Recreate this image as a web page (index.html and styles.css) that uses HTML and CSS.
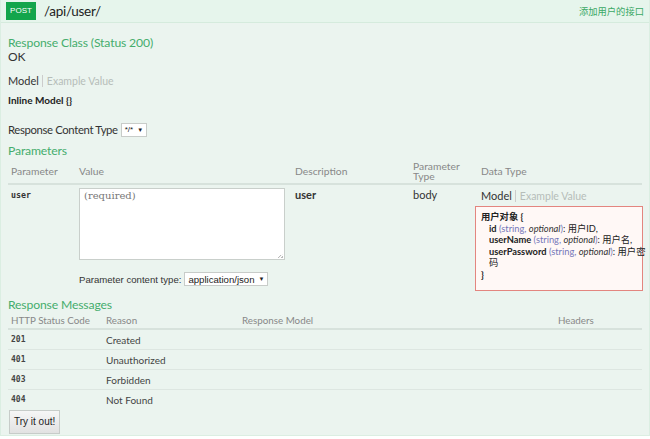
FILE: index.html
```html
<!DOCTYPE html>
<html>
<head>
<meta charset="utf-8">
<link rel="stylesheet" href="styles.css">
</head>
<body>
<div class="op">
  <div class="heading">
    <span class="verb">POST</span>
    <span class="path">/api/user/</span>
    <span class="summary">添加用户的接口</span>
  </div>
  <div class="content">
    <h4 class="sec first">Response Class (Status 200)</h4>
    <div class="ok">OK</div>
    <div class="tabs"><span class="tab-on">Model</span><span class="tab-sep"></span><span class="tab-off">Example Value</span></div>
    <div class="inline-model">Inline Model {}</div>
    <div class="rct">Response Content Type <span class="sel small">*/* <i class="arr">▼</i></span></div>
    <h4 class="sec">Parameters</h4>
    <table class="params">
      <colgroup>
        <col class="pc1"><col class="pc2"><col class="pc3"><col class="pc4"><col>
      </colgroup>
      <thead>
        <tr>
          <th>Parameter</th>
          <th>Value</th>
          <th>Description</th>
          <th>Parameter<br>Type</th>
          <th>Data Type</th>
        </tr>
      </thead>
      <tbody>
        <tr>
          <td class="code">user</td>
          <td>
            <div class="ta">(required)<span class="grip"></span></div>
            <div class="pct">Parameter content type: <span class="sel">application/json <i class="arr">▼</i></span></div>
          </td>
          <td class="bold">user</td>
          <td>body</td>
          <td>
            <div class="tabs small-tabs"><span class="tab-on">Model</span><span class="tab-sep"></span><span class="tab-off">Example Value</span></div>
            <div class="model">
              <div class="mb">用户对象 {</div>
              <div class="prop"><b>id</b> <span class="ty">(string, <em>optional</em>)</span>: 用户ID,</div>
              <div class="prop"><b>userName</b> <span class="ty">(string, <em>optional</em>)</span>: 用户名,</div>
              <div class="prop"><b>userPassword</b> <span class="ty">(string, <em>optional</em>)</span>: 用户密<br>码</div>
              <div class="mb">}</div>
            </div>
          </td>
        </tr>
      </tbody>
    </table>
    <h4 class="sec msgs">Response Messages</h4>
    <table class="resp">
      <colgroup>
        <col class="rc1"><col class="rc2"><col class="rc3"><col>
      </colgroup>
      <thead>
        <tr>
          <th>HTTP Status Code</th>
          <th>Reason</th>
          <th>Response Model</th>
          <th>Headers</th>
        </tr>
      </thead>
      <tbody>
        <tr><td class="code">201</td><td>Created</td><td></td><td></td></tr>
        <tr><td class="code">401</td><td>Unauthorized</td><td></td><td></td></tr>
        <tr><td class="code">403</td><td>Forbidden</td><td></td><td></td></tr>
        <tr class="last"><td class="code">404</td><td>Not Found</td><td></td><td></td></tr>
      </tbody>
    </table>
    <div class="try">Try it out!</div>
  </div>
</div>
</body>
</html>
```
FILE: styles.css
```css
html, body { margin: 0; padding: 0; background: #ffffff; }
body { font-family: "Lato", "Noto Sans CJK SC", sans-serif; color: #333; width: 650px; height: 439px; overflow: hidden; }
.op { width: 648px; height: 435px; border: 1px solid #dbeee2; border-top: none; background: #ebf4ef; }
.heading { height: 22px; background: #e6f5ec; border-bottom: 1px solid #d5ebdd; display: flex; align-items: center; }
.verb { margin-left: 5px; width: 30px; height: 18px; background: #13a54b; color: #fff; font-size: 8px; line-height: 18px; text-align: center; font-family: "Liberation Sans", sans-serif; }
.path { margin-left: 8px; font-size: 13.5px; letter-spacing: -0.3px; color: #222; line-height: 18px; }
.summary { margin-left: auto; margin-right: 5px; font-size: 9.3px; color: #3aa864; font-family: "Noto Sans CJK SC", sans-serif; line-height: 12px; }
.content { padding: 0 7px 0 7px; }
.sec { margin: 0; font-weight: normal; color: #45ad6d; font-size: 12.2px; letter-spacing: -0.15px; line-height: 14px; }
.sec.first { padding-top: 13px; }
.ok { font-size: 12px; line-height: 13px; color: #333; }
.tabs { margin-top: 11px; font-size: 11px; line-height: 14px; display: flex; align-items: center; }
.tab-on { color: #333; }
.tab-sep { width: 1px; height: 12px; background: #ccc; margin: 0 4px 0 3px; }
.tab-off { color: #b6bdb9; font-size: 10.5px; }
.inline-model { margin-top: 6px; font-size: 10px; font-weight: bold; color: #222; line-height: 12px; }
.rct { margin-top: 16px; font-size: 11.3px; letter-spacing: -0.35px; line-height: 16px; color: #333; display: flex; align-items: center; }
.sel { display: inline-flex; align-items: center; background: #fff; border: 1px solid #c8ccc9; font-family: "Liberation Sans", sans-serif; font-size: 9.6px; letter-spacing: 0; color: #222; padding: 0 3px; height: 12px; margin-left: 3px; }
.sel.small { font-size: 8px; }
.arr { font-style: normal; font-size: 6px; margin-left: 4px; }
.rct + .sec { margin-top: 6px; }
table { border-collapse: collapse; width: 100%; table-layout: fixed; }
.pc1 { width: 68px; }
.pc2 { width: 216px; }
.pc3 { width: 118px; }
.pc4 { width: 68px; }
.rc1 { width: 95px; }
.rc2 { width: 136px; }
.rc3 { width: 316px; }
.params { margin-top: 1px; }
.params th { font-weight: normal; color: #888; font-size: 10.3px; text-align: left; padding: 0 3px; line-height: 10.5px; height: 24px; border-bottom: 2px solid #d7e2dc; vertical-align: middle; }
.params td { vertical-align: top; font-size: 11px; padding: 3px 3px 0 3px; color: #333; }
.params td.code { padding-top: 5px; font-size: 8.3px; }
.code { font-family: "DejaVu Sans Mono", monospace; font-weight: bold; font-size: 8.3px; color: #333; }
.bold { font-weight: bold; }
.ta { position: relative; width: 206px; height: 72px; background: #fff; border: 1px solid #c9cfcb; font-family: "DejaVu Serif", serif; font-size: 10px; color: #777; padding: 1px 0 0 4px; box-sizing: border-box; }
.grip { position: absolute; right: 1px; bottom: 1px; width: 5px; height: 5px; background: linear-gradient(135deg, transparent 50%, #bbb 50%, transparent 62%, transparent 75%, #bbb 75%); }
.pct { margin-top: 12px; font-family: "Liberation Sans", sans-serif; font-size: 9.6px; color: #333; display: flex; align-items: center; }
.pct .sel { height: 12px; padding: 0 3px; }
.small-tabs { margin-top: 0; padding-top: 1px; font-size: 11px; }
.small-tabs .tab-off { font-size: 10.5px; }
.model { margin: 3px 0 0 -6px; width: 168px; height: 85px; box-sizing: border-box; border: 1px solid #e3857f; background: #fff8f6; padding: 4px 4px 4px 5px; font-size: 9.3px; line-height: 11.5px; color: #222; }
.mb { font-weight: bold; }
.prop { padding-left: 8px; white-space: nowrap; }
.prop b { font-weight: bold; }
.ty { color: #7577b9; }
.ty em { color: #333; }
.sec.msgs { margin-top: 7px; }
.resp { margin-top: 0; }
.resp th { font-weight: normal; color: #888; font-size: 9.8px; text-align: left; padding: 0 3px; height: 16px; line-height: 12px; border-bottom: 2px solid #d7e2dc; }
.resp td { font-size: 10px; height: 19px; padding: 0 3px; border-bottom: 1px solid #dde6e1; color: #444; }
.resp tr.last td { border-bottom: none; }
.resp td.code { font-size: 8px; }
.try { display: inline-block; margin-left: 1px; border: 1px solid #c7ccc9; background: linear-gradient(#f6f6f6, #e2e2e2); font-family: "Liberation Sans", sans-serif; font-size: 10px; color: #222; padding: 0 4px; height: 22px; line-height: 22px; }
```
